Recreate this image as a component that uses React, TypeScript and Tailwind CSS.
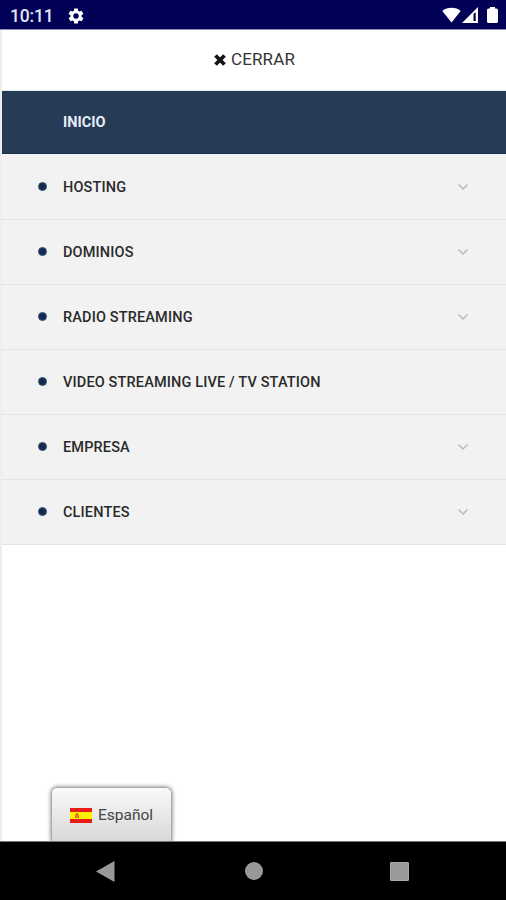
import React from "react";

type Item = { label: string; expandable: boolean };

const items: Item[] = [
  { label: "HOSTING", expandable: true },
  { label: "DOMINIOS", expandable: true },
  { label: "RADIO STREAMING", expandable: true },
  { label: "VIDEO STREAMING LIVE / TV STATION", expandable: false },
  { label: "EMPRESA", expandable: true },
  { label: "CLIENTES", expandable: true },
];

function StatusBar() {
  return (
    <header className="flex h-[30px] shrink-0 items-center border-b border-[#8f8daf] bg-[#000056] pr-[8px] pl-[10px] text-[#e4e4f4]">
      <span className="mt-[3px] w-[57px] text-[17.5px] leading-5 font-medium tracking-[-0.15px]">10:11</span>
      <svg viewBox="0 0 24 24" className="mt-[2px] h-[18px] w-[18px] fill-white">
        <path
          fillRule="evenodd"
          d="M19.4 13a7.6 7.6 0 0 0 0-2l2.1-1.6c.2-.2.3-.5.1-.7l-2-3.4c-.1-.3-.4-.3-.6-.3l-2.5 1a7 7 0 0 0-1.7-1L14.500 2.400A.5.5 0 0 0 14 2h-4c-.3 0-.5.2-.5.4L9.100 5a8 8 0 0 0-1.700 1l-2.500-1c-.2-.1-.5 0-.6.200l-2 3.500c-.1.200-.1.500.1.600L4.600 11a7.600 7.600 0 0 0 0 2l-2.100 1.600c-.2.200-.2.500-.1.700l2 3.400c.1.300.4.300.6.300l2.500-1a7 7 0 0 0 1.700 1l.3 2.600c.1.200.3.400.5.400h4c.3 0 .5-.2.500-.4l.4-2.600a8 8 0 0 0 1.700-1l2.500 1c.2.100.5 0 .6-.2l2-3.500c.1-.2.1-.5-.1-.6zM12 15.600a3.600 3.600 0 1 1 0-7.200 3.600 3.600 0 0 1 0 7.200z"
        />
      </svg>
      <div className="mt-[1px] ml-auto flex items-center fill-white">
        <svg viewBox="0 0 19 16" className="h-[16px] w-[19px]">
          <path d="M.3 4C5-.3 14-.3 18.700 4L9.500 15.500z" />
        </svg>
        <svg viewBox="0 0 17 16" className="ml-[1px] h-[16px] w-[17px]">
          <path fillRule="evenodd" d="M0 16 16 0v16zM11.500 6.500V14h2.200V5.500z" />
        </svg>
        <svg viewBox="0 0 11 16" className="ml-[8px] h-[16px] w-[11px]">
          <path d="M3 0h5v1.500h1.500Q11 1.700 11 3v11.500Q11 16 9.500 16h-8Q0 16 0 14.500V3Q0 1.700 1.500 1.500H3z" />
        </svg>
      </div>
    </header>
  );
}

function MenuRow({ label, expandable }: Item) {
  return (
    <li className="flex h-[65px] items-center border-b border-[#e4e4e4] bg-[#f2f2f2] pr-[37px] pl-[36px]">
      <span className="mb-px h-[9px] w-[9px] rounded-full border border-[#3c5270] bg-[#142b50]" />
      <span className="ml-[16px] pt-[2px] text-[14.5px] leading-5 font-medium tracking-[0.15px] text-[#2a2a2a]">{label}</span>
      {expandable && (
        <svg viewBox="0 0 12 8" className="ml-auto h-[8px] w-[12px] fill-none stroke-[#bababa] stroke-[1.500]">
          <path d="m1.500 1.500 4.500 4.500 4.500-4.500" />
        </svg>
      )}
    </li>
  );
}

function SpanishFlag() {
  return (
    <svg viewBox="0 0 22 15" className="h-[15px] w-[22px]">
      <path fill="#e81c17" d="M0 0h22v15H0z" />
      <path fill="#fff200" d="M0 4h22v7H0z" />
      <path fill="#e46b18" d="M5 6.500h1V5h2v1.500h1V10H5z" />
      <path fill="#f5ca2a" d="M6.500 7.500h1V9h-1z" />
    </svg>
  );
}

export default function App() {
  return (
    <div className="flex h-[900px] w-[506px] flex-col overflow-hidden bg-white font-['Roboto',sans-serif]">
      <StatusBar />
      <main className="flex min-h-0 flex-1 flex-col overflow-hidden border-l-2 border-[#eeeeee]">
        <button className="flex h-[61px] w-full shrink-0 items-center justify-center border-b border-[#e6eeee] pl-[1px] text-[17px] text-[#333333]">
          <svg viewBox="0 0 12 12" className="mr-[5px] h-[12px] w-[12px] fill-none stroke-[#151515] stroke-[3.800]">
            <path d="m1.500 1.500 9 9m0-9-9 9" />
          </svg>
          <span className="tracking-[0.15px]">CERRAR</span>
        </button>
        <nav>
          <ul className="bg-[#f5f5f5]">
            <li className="mb-px flex h-[63px] items-center border-b border-[#173052] bg-[#263b56] pt-px pl-[61px] text-[14.5px] font-bold text-[#e6edf8]">
              INICIO
            </li>
            {items.map((item) => (
              <MenuRow key={item.label} {...item} />
            ))}
          </ul>
        </nav>
        <div className="mt-auto ml-[49px] flex h-[54px] w-[121px] shrink-0 items-center rounded-t-[6px] border border-b-0 border-[#aaaaaa] bg-linear-to-b from-[#fafafa] to-[#d8d8d8] pt-[2px] pl-[18px] shadow-[0_0_4px_#777777]">
          <SpanishFlag />
          <span className="ml-[6px] text-[15.5px] text-[#444444]">Español</span>
        </div>
      </main>
      <footer className="flex h-[59px] shrink-0 items-center border-t border-[#777777] bg-black pl-[96px]">
        <svg viewBox="0 0 19 21" className="h-[21px] w-[19px] fill-[#999999]">
          <path d="M0 10.500 18.500 0v21z" />
        </svg>
        <span className="ml-[129.5px] h-[18px] w-[18px] rounded-full bg-[#999999]" />
        <span className="ml-[127.5px] h-[19px] w-[19px] rounded-[1px] border border-[#aaaaaa] bg-[#999999]" />
      </footer>
    </div>
  );
}
